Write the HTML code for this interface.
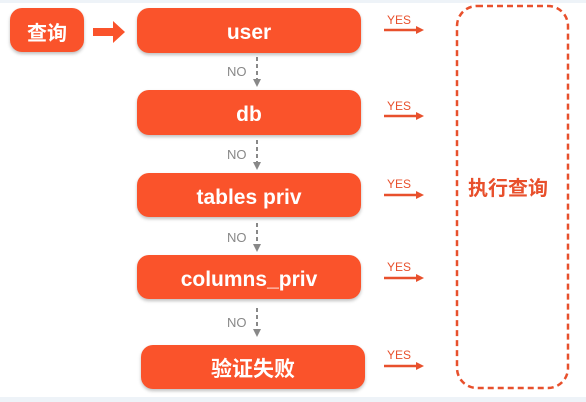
<!DOCTYPE html>
<html><head><meta charset="utf-8"><style>
body{margin:0;width:586px;height:402px;background:#fff;position:relative;overflow:hidden;font-family:"Liberation Sans","Noto Sans CJK SC",sans-serif}
.b{position:absolute;background:#fa532b;color:#fff;border-radius:12px;display:flex;align-items:center;justify-content:center;font-weight:bold;font-size:21px;box-shadow:0 2px 3px rgba(0,0,0,.25);box-sizing:border-box;padding-top:5px}
.no{position:absolute;left:227px;font-size:13px;color:#888}
.yes{position:absolute;left:387px;font-size:12px;color:#e8502c}
.top{position:absolute;left:0;top:0;width:586px;height:3px;background:#eef3f8}
.bot{position:absolute;left:0;top:397px;width:586px;height:5px;background:#eef3f8}
</style></head><body>
<div class="top"></div><div class="bot"></div>
<div class="b" style="left:10px;top:8px;width:74px;height:44px;font-size:20px;padding-top:2px">查询</div>
<div class="b" style="left:137px;top:8px;width:224px;height:45px">user</div>
<div class="b" style="left:137px;top:90px;width:224px;height:45px">db</div>
<div class="b" style="left:137px;top:173px;width:224px;height:44px">tables priv</div>
<div class="b" style="left:137px;top:255px;width:224px;height:44px">columns_priv</div>
<div class="b" style="left:141px;top:345px;width:224px;height:44px;font-size:21px;padding-top:2px">验证失败</div>
<div class="no" style="top:64px">NO</div>
<div class="no" style="top:147px">NO</div>
<div class="no" style="top:230px">NO</div>
<div class="no" style="top:315px">NO</div>
<div class="yes" style="top:13px">YES</div>
<div class="yes" style="top:99px">YES</div>
<div class="yes" style="top:177px">YES</div>
<div class="yes" style="top:260px">YES</div>
<div class="yes" style="top:348px">YES</div>
<div style="position:absolute;left:468px;top:172px;font-size:20px;font-weight:bold;color:#e8502c;font-family:'Noto Sans CJK SC',sans-serif">执行查询</div>
<svg width="586" height="402" style="position:absolute;left:0;top:0">
<path d="M93 28h20v-7l12 11-12 11v-7h-20z" fill="#fa532b"/>
<g stroke="#888" stroke-width="2" stroke-dasharray="4 3" fill="none">
<line x1="257" y1="57" x2="257" y2="80"/><line x1="257" y1="140" x2="257" y2="163"/>
<line x1="257" y1="223" x2="257" y2="245"/><line x1="257" y1="308" x2="257" y2="330"/>
</g>
<g fill="#888">
<path d="M253 79h8l-4 8z"/><path d="M253 162h8l-4 8z"/><path d="M253 244h8l-4 8z"/><path d="M253 329h8l-4 8z"/>
</g>
<g stroke="#e8502c" stroke-width="2.5">
<line x1="384" y1="30" x2="418" y2="30"/><line x1="384" y1="116" x2="418" y2="116"/>
<line x1="384" y1="195" x2="418" y2="195"/><line x1="384" y1="278" x2="418" y2="278"/>
<line x1="384" y1="366" x2="418" y2="366"/>
</g>
<g fill="#e8502c">
<path d="M416 26l8 4-8 4z"/><path d="M416 112l8 4-8 4z"/><path d="M416 191l8 4-8 4z"/><path d="M416 274l8 4-8 4z"/><path d="M416 362l8 4-8 4z"/>
</g>
<rect x="457" y="6" width="111" height="382" rx="20" fill="none" stroke="#e8502c" stroke-width="2.5" stroke-dasharray="6 4"/>
</svg>
</body></html>
